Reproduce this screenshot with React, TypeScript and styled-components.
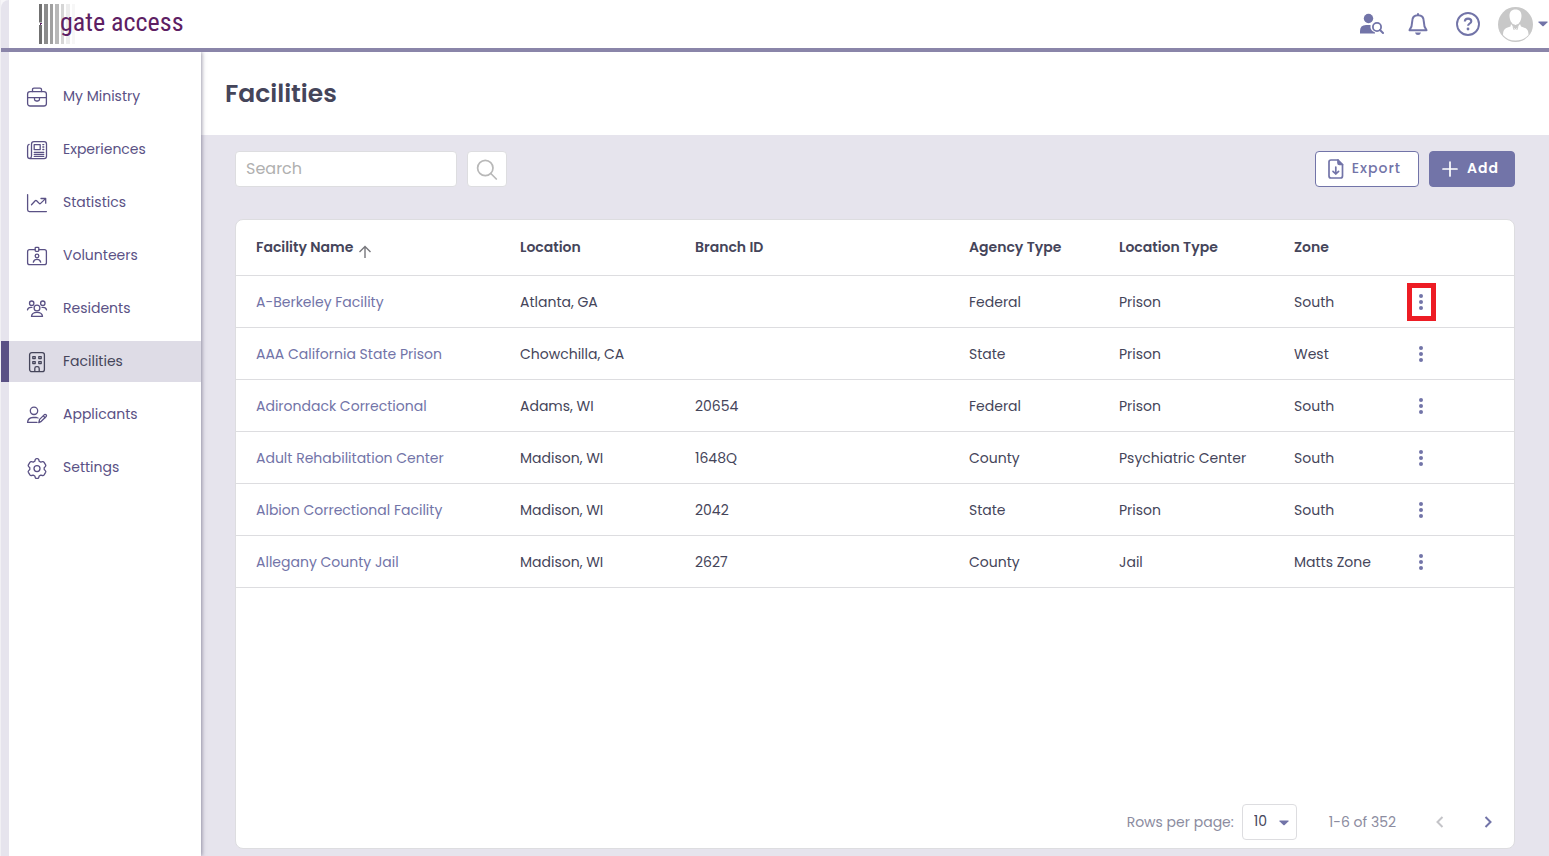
import React from "react";
import styled, { createGlobalStyle } from "styled-components";

const c = {
  lavender: "#e6e4ed",
  purple: "#5a5185",
  accent: "#7274a8",
  ink: "#45455a",
  line: "#dddde0",
};

const GlobalStyle = createGlobalStyle`
  * { box-sizing: border-box; }
  body { margin: 0; background: ${c.lavender}; color: ${c.ink}; font: 14px/20px Poppins, Inter, sans-serif; }
  button, input, select { font: inherit; color: inherit; }
  button { cursor: pointer; }
  svg { display: block; flex: none; }
`;

const Page = styled.div`
  min-height: 100vh;
  display: flex;
  flex-direction: column;
  border-left: 1px solid #f1f0f4;
  background: #f7f6f9;
`;

const Header = styled.header`
  height: 52px;
  display: flex;
  align-items: center;
  justify-content: space-between;
  background: linear-gradient(to right, ${c.lavender} 8px, #fff 8px);
  border-top-left-radius: 8px;
  box-shadow: inset 0 -4px #8a85a9;
  padding: 0 1px 4px 38px;
`;

const Brand = styled.a`
  display: flex;
  align-items: center;
  color: #5d2063;
  font: 26px/40px "Roboto Condensed", "Barlow Semi Condensed", "Liberation Sans Narrow", "DejaVu Sans Condensed", sans-serif;
  text-decoration: none;
`;

const BrandText = styled.span`
  margin: -4px 0 0 -16px;
`;

const HeaderTools = styled.div`
  display: flex;
  align-items: center;
  gap: 24px;
  color: ${c.accent};
`;

const IconButton = styled.button`
  display: flex;
  align-items: center;
  gap: 5px;
  padding: 0;
  border: 0;
  background: none;
  color: inherit;
`;

const AccountButton = styled(IconButton)`
  margin-left: -10px;
`;

const Body = styled.div`
  flex: 1;
  display: flex;
  background: ${c.lavender};
`;

const Sidebar = styled.nav`
  position: relative;
  flex: none;
  width: 200px;
  display: flex;
  flex-direction: column;
  gap: 12px;
  padding-top: 24px;
  background: linear-gradient(to right, ${c.lavender} 8px, #fff 8px);
  box-shadow: 1px 0 4px rgba(60, 55, 90, 0.5);
  clip-path: inset(0 -8px 0 0);
`;

const NavLink = styled.a<{ $active?: boolean }>`
  height: 41px;
  display: flex;
  align-items: center;
  gap: 15px;
  padding-left: 17px;
  border-left: 8px solid ${(p) => (p.$active ? c.purple : "transparent")};
  background: ${(p) => (p.$active ? "#dedce6" : "none")};
  background-clip: padding-box;
  color: ${(p) => (p.$active ? c.ink : c.purple)};
  text-decoration: none;
`;

const NavLabel = styled.span`
  padding-bottom: 2px;
`;

const Main = styled.main`
  flex: 1;
  min-width: 0;
  display: flex;
  flex-direction: column;
`;

const TitleBar = styled.div`
  height: 83px;
  display: flex;
  align-items: center;
  padding: 0 24px;
  background: #fff;
`;

const Title = styled.h1`
  margin: 0;
  font-size: 25px;
  line-height: 36px;
  font-weight: 600;
`;

const Content = styled.div`
  flex: 1;
  display: flex;
  flex-direction: column;
  gap: 32px;
  padding: 16px 34px 7px;
`;

const Toolbar = styled.div`
  display: flex;
  justify-content: space-between;
`;

const Group = styled.div`
  display: flex;
  gap: 10px;
`;

const SearchInput = styled.input`
  width: 222px;
  height: 36px;
  padding: 0 10px 2px;
  border: 1px solid ${c.line};
  border-radius: 4px;
  background: #fff;
  font-size: 16px;
  &::placeholder { color: #b0b0b0; opacity: 1; }
`;

const SearchButton = styled.button`
  width: 40px;
  height: 36px;
  display: flex;
  align-items: center;
  justify-content: center;
  padding: 0;
  border: 1px solid ${c.line};
  border-radius: 4px;
  background: #fff;
  color: #b8b8b8;
`;

const ActionButton = styled.button<{ $primary?: boolean }>`
  height: 36px;
  display: flex;
  align-items: center;
  gap: ${(p) => (p.$primary ? 9 : 8)}px;
  padding: 0 ${(p) => (p.$primary ? 15 : 17)}px 0 12px;
  border: 1px solid ${c.accent};
  border-radius: 4px;
  background: ${(p) => (p.$primary ? c.accent : "#fff")};
  color: ${(p) => (p.$primary ? "#fff" : c.accent)};
  font-weight: ${(p) => (p.$primary ? 600 : 500)};
  letter-spacing: 1px;
`;

const ActionLabel = styled.span`
  padding-bottom: 2px;
`;

const Card = styled.section`
  flex: 1;
  display: flex;
  flex-direction: column;
  justify-content: space-between;
  border: 1px solid ${c.line};
  border-radius: 8px;
  background: #fff;
`;

const Table = styled.table`
  width: 100%;
  table-layout: fixed;
  border-collapse: separate;
  border-spacing: 0;
`;

const HeadCell = styled.th<{ $width?: number }>`
  width: ${(p) => (p.$width ? `${p.$width}px` : "auto")};
  height: 56px;
  padding: 0 0 2px 20px;
  border-bottom: 1px solid ${c.line};
  text-align: left;
  font-weight: 600;
  white-space: nowrap;
`;

const SortButton = styled(IconButton)`
  height: 20px;
  font-weight: 600;
  svg { margin-top: 10px; }
`;

const Cell = styled.td<{ $flush?: boolean }>`
  height: 52px;
  padding: 0 0 0 ${(p) => (p.$flush ? 0 : 20)}px;
  border-bottom: 1px solid ${c.line};
  white-space: nowrap;
`;

const FacilityLink = styled.a`
  color: ${c.accent};
  text-decoration: none;
`;

const RowMenu = styled.button<{ $marked?: boolean }>`
  width: 29px;
  height: 38px;
  display: flex;
  align-items: center;
  justify-content: center;
  padding: 0;
  border: 5px solid ${(p) => (p.$marked ? "#ed1c24" : "transparent")};
  background: none;
  color: ${c.accent};
`;

const Pager = styled.footer`
  display: flex;
  align-items: center;
  justify-content: flex-end;
  padding: 0 18px 8px;
  color: #8c8ca0;
`;

const SelectWrap = styled.span`
  position: relative;
  margin: 0 32px 0 8px;
  svg { position: absolute; right: 8px; top: 16px; pointer-events: none; color: ${c.accent}; }
`;

const Select = styled.select`
  display: block;
  width: 55px;
  height: 36px;
  padding: 0 0 2px 11px;
  appearance: none;
  border: 1px solid ${c.line};
  border-radius: 4px;
  background: #fff;
  color: ${c.ink};
`;

const PageButton = styled(IconButton)<{ $first?: boolean }>`
  margin-left: ${(p) => (p.$first ? 36 : 32)}px;
  color: ${(p) => (p.disabled ? "#c4c4c8" : c.accent)};
`;

const LineIcon = ({ children }: { children: React.ReactNode }) => (
  <svg width="22" height="22" viewBox="0 0 22 22" fill="none" stroke="currentColor" strokeWidth="1.3" strokeLinecap="round" strokeLinejoin="round" aria-hidden="true">
    {children}
  </svg>
);

const Caret = () => (
  <svg width="10" height="6" viewBox="0 0 10 6" fill="currentColor" aria-hidden="true">
    <path d="M.8.5h8.4q.8 0 .3.7L5.7 5q-.7.6-1.400 0L.5 1.200Q0 .5.8.5z" />
  </svg>
);

const navItems: { label: string; active?: boolean; icon: React.ReactNode }[] = [
  {
    label: "My Ministry",
    icon: (
      <>
        <rect x="1.600" y="5.600" width="18.800" height="14.400" rx="2.500" />
        <path d="M6.500 5.500V3.600q0-1.500 1.500-1.500h6q1.500 0 1.500 1.500v1.900M1.600 11.700h18.800M8.500 11.800v1.400q0 1.800 1.800 1.800h1.400q1.800 0 1.800-1.800v-1.400" />
      </>
    ),
  },
  {
    label: "Experiences",
    icon: (
      <>
        <path d="M5.500 17V5q0-2.400 2.400-2.400h10.200q2.400 0 2.400 2.400v12.200q0 2.400-2.400 2.400H4q-2.400 0-2.400-2.400V7.500q0-1.800 1.500-2.100M5.500 17q0 2.200-1.800 2.500" />
        <path d="M8.200 5.600h6v5h-6zM16.800 5.600h1M16.800 8h1M16.800 10.500h1M8.200 13.300h9.600M8.200 15.300h9.600M8.200 17.300h9.600" />
      </>
    ),
  },
  {
    label: "Statistics",
    icon: <path d="M1.600 2.600v15.200q0 1.800 1.800 1.800h17M5.500 12.700l3.700-4q.7-.7 1.400 0l2.600 2.700q.7.700 1.400 0l5-4.800M15 6.500h4.700v4.700" />,
  },
  {
    label: "Volunteers",
    icon: (
      <>
        <path d="M9 4.700H3.600q-2 0-2 2v11q0 2 2 2h14.800q2 0 2-2v-11q0-2-2-2H13" />
        <rect x="9.200" y="2.300" width="3.600" height="4" rx=".8" />
        <circle cx="11" cy="11" r="1.800" />
        <path d="M7.300 17.200q.8-2.800 3.700-2.800t3.700 2.800" />
      </>
    ),
  },
  {
    label: "Residents",
    icon: (
      <>
        <circle cx="11" cy="10" r="2.900" />
        <circle cx="5.700" cy="5.200" r="2.200" />
        <circle cx="16.800" cy="5.200" r="2.200" />
        <path d="M5.500 18.400q.4-4 5.500-4t5.500 4zM1.500 11.800q.4-2.500 3.500-2.500h1M20.500 11.800q-.4-2.500-3.500-2.500h-1" />
      </>
    ),
  },
  {
    label: "Facilities",
    active: true,
    icon: (
      <>
        <rect x="3.600" y="1.600" width="14.800" height="19" rx="2.200" />
        <path d="M6.800 5.600h2.400v2H6.800zM12.800 5.600h2.400v2h-2.400zM6.800 10.600h2.400v2H6.800zM12.800 10.600h2.400v2h-2.400zM8.800 20.400v-3q0-1.800 1.800-1.800h.8q1.800 0 1.800 1.800v3" />
      </>
    ),
  },
  {
    label: "Applicants",
    icon: (
      <>
        <circle cx="8" cy="6.800" r="3.700" />
        <path d="M11 18.400H1.600q.2-4.700 5.400-4.900h3.500l1.500.5M12.800 18.600l.8-3.200 4.800-4.800q.8-.6 1.700.1.800.9.100 1.800l-4.900 4.800zM17.200 11.800l1.900 1.900" />
      </>
    ),
  },
  {
    label: "Settings",
    icon: (
      <>
        <path d="M9.200 2.800q.3-1.200 1.300-1.200h1q1 0 1.300 1.200l.4 1.400 1.600.9 1.700-.4q1-.2 1.600.7l1.500 2.500q.5.900-.3 1.700l-1.100 1.100v1.800l1.100 1.100q.8.800.3 1.700l-1.500 2.500q-.6.900-1.600.7l-1.700-.4-1.600.9-.4 1.300q-.3 1.200-1.300 1.200h-1q-1 0-1.300-1.200L8.800 19l-1.600-.9-1.700.4q-1 .2-1.600-.7l-1.500-2.500q-.5-.9.300-1.700l1.100-1.100v-1.800L2.700 9.600q-.8-.8-.3-1.700l1.500-2.500q.6-.9 1.600-.7l1.700.4 1.600-.9z" />
        <circle cx="11" cy="11.600" r="3" />
      </>
    ),
  },
];

const columns: [string, number | undefined][] = [
  ["Facility Name", 264],
  ["Location", 175],
  ["Branch ID", 274],
  ["Agency Type", 150],
  ["Location Type", 175],
  ["Zone", 133],
  ["", undefined],
];

const facilities = [
  ["A-Berkeley Facility", "Atlanta, GA", "", "Federal", "Prison", "South"],
  ["AAA California State Prison", "Chowchilla, CA", "", "State", "Prison", "West"],
  ["Adirondack Correctional", "Adams, WI", "20654", "Federal", "Prison", "South"],
  ["Adult Rehabilitation Center", "Madison, WI", "1648Q", "County", "Psychiatric Center", "South"],
  ["Albion Correctional Facility", "Madison, WI", "2042", "State", "Prison", "South"],
  ["Allegany County Jail", "Madison, WI", "2627", "County", "Jail", "Matts Zone"],
];

export default function App() {
  return (
    <Page>
      <GlobalStyle />
      <Header>
        <Brand href="#">
          <svg width="37" height="40" viewBox="0 0 37 40" aria-hidden="true">
            <path fill="#707070" d="M0 0h3v40H0z" />
            <path fill="#8c8c8c" d="M5 0h4v40H5z" />
            <path fill="#a0a0a0" d="M11 0h3v40h-3z" />
            <path fill="#b8b8b8" d="M16 0h4v40h-4z" />
            <path fill="#d6d6d6" d="M22 0h3v40h-3z" />
            <path fill="#ededed" d="M27 0h4v40h-4z" />
            <path fill="#f7f7f7" d="M33 0h3v40h-3z" />
            <path fill="#fff" d="M0 18.500h3v2.500H0z" />
            <path fill="#5d2063" d="M1 19h2v1H2v1H1z" />
          </svg>
          <BrandText>gate access</BrandText>
        </Brand>
        <HeaderTools>
          <IconButton aria-label="Find person">
            <svg width="24" height="22" viewBox="0 0 24 22" fill="currentColor">
              <circle cx="8.500" cy="5.500" r="4.700" />
              <path d="M0 20.500V18q0-6 6-6h4.500q-.7 5.500 4.500 7.500v1z" />
              <circle cx="17" cy="14" r="4.100" fill="none" stroke="currentColor" strokeWidth="1.800" />
              <path d="M20 17l3 3" stroke="currentColor" strokeWidth="2" strokeLinecap="round" />
            </svg>
          </IconButton>
          <IconButton aria-label="Notifications">
            <svg width="20" height="24" viewBox="0 0 20 24" fill="none" stroke="currentColor" strokeWidth="2" strokeLinejoin="round" strokeLinecap="round">
              <path d="M10 3.300c-3.800 0-5.800 2.700-5.800 6.200 0 4.400-.8 6.200-2.700 8.700h17c-1.900-2.500-2.700-4.300-2.700-8.700 0-3.500-2-6.200-5.800-6.200zM10 2v1" />
              <path d="M7 20.500h6q-.6 2.500-3 2.500t-3-2.500z" fill="currentColor" stroke="none" />
            </svg>
          </IconButton>
          <IconButton aria-label="Help">
            <svg width="32" height="24" viewBox="-4 0 32 24" fill="none" stroke="currentColor" strokeWidth="1.900">
              <circle cx="12" cy="12" r="11" />
              <path d="M8.800 9.500c.1-2 1.300-2.900 3.200-2.900s3.300 1 3.300 2.600c0 2.300-3.200 2.300-3.200 4.600" strokeWidth="2.100" />
              <circle cx="12" cy="17" r="1.400" fill="currentColor" stroke="none" />
            </svg>
          </IconButton>
          <AccountButton aria-label="Account">
            <svg width="35" height="35" viewBox="0 0 35 35">
              <circle cx="17.500" cy="17.500" r="17.500" fill="#c8c8c8" />
              <path d="M17.500 2.500c-4 0-6.200 2.700-6 6.500.2 4 2 9 6 9s5.800-5 6-9c.2-3.800-2-6.500-6-6.500z" fill="#fff" />
              <path d="M13 17l4.500 5.500L22 17l1 2.500c4 1.500 7.500 1.500 7.500 8.500q-5 5.500-13 5.500T5 28c0-7 3.500-7 7.500-8.500z" fill="#fff" />
              <path d="M12.500 15q1.500 3.500 5 3.500t5-3.500M15 19.500l1.200 3.500M20 19.500L18.800 23" fill="none" stroke="#c8c8c8" strokeWidth="1" />
            </svg>
            <Caret />
          </AccountButton>
        </HeaderTools>
      </Header>
      <Body>
        <Sidebar aria-label="Main">
          {navItems.map((item) => (
            <NavLink key={item.label} href="#" $active={item.active} aria-current={item.active ? "page" : undefined}>
              <LineIcon>{item.icon}</LineIcon>
              <NavLabel>{item.label}</NavLabel>
            </NavLink>
          ))}
        </Sidebar>
        <Main>
          <TitleBar>
            <Title>Facilities</Title>
          </TitleBar>
          <Content>
            <Toolbar>
              <Group>
                <SearchInput type="search" placeholder="Search" aria-label="Search" />
                <SearchButton aria-label="Search">
                  <svg width="22" height="22" viewBox="0 0 22 22" fill="none" stroke="currentColor" strokeWidth="1.700" strokeLinecap="round">
                    <circle cx="9.300" cy="10" r="7.700" />
                    <path d="M14.800 15.500l5.500 5.500" />
                  </svg>
                </SearchButton>
              </Group>
              <Group>
                <ActionButton>
                  <svg width="16" height="20" viewBox="0 0 16 20" fill="none" stroke="currentColor" strokeWidth="1.700" strokeLinejoin="round" strokeLinecap="round">
                    <path d="M10 1H3Q1 1 1 3v14q0 2 2 2h9.500q2 0 2-2V5.500" />
                    <path d="M10 1v3q0 1.500 1.500 1.500h3z" fill="currentColor" />
                    <path d="M7.800 8v7M5 12.300L7.800 15l2.800-2.700" />
                  </svg>
                  <ActionLabel>Export</ActionLabel>
                </ActionButton>
                <ActionButton $primary>
                  <svg width="16" height="16" viewBox="0 0 16 16" stroke="currentColor" strokeWidth="1.700" strokeLinecap="round">
                    <path d="M8 1v14M1 8h14" />
                  </svg>
                  <ActionLabel>Add</ActionLabel>
                </ActionButton>
              </Group>
            </Toolbar>
            <Card>
              <Table>
                <thead>
                  <tr>
                    {columns.map(([name, width], i) => (
                      <HeadCell key={name} $width={width} aria-sort={i === 0 ? "ascending" : undefined}>
                        {i === 0 ? (
                          <SortButton>
                            {name}
                            <svg width="14" height="14" viewBox="0 0 14 14" fill="none" stroke="#77777c" strokeWidth="1.400">
                              <path d="M7 13V2M1.500 7L7 1.500 12.500 7" />
                            </svg>
                          </SortButton>
                        ) : (
                          name
                        )}
                      </HeadCell>
                    ))}
                  </tr>
                </thead>
                <tbody>
                  {facilities.map(([name, ...rest], i) => (
                    <tr key={name}>
                      <Cell>
                        <FacilityLink href="#">{name}</FacilityLink>
                      </Cell>
                      {rest.map((value, j) => (
                        <Cell key={j}>{value}</Cell>
                      ))}
                      <Cell $flush>
                        <RowMenu $marked={i === 0} aria-label={`Actions for ${name}`}>
                          <svg width="5" height="16" viewBox="0 0 5 16" fill="currentColor">
                            <circle cx="2" cy="2" r="2" />
                            <circle cx="2" cy="8" r="2" />
                            <circle cx="2" cy="14" r="2" />
                          </svg>
                        </RowMenu>
                      </Cell>
                    </tr>
                  ))}
                </tbody>
              </Table>
              <Pager>
                <label htmlFor="rows">Rows per page:</label>
                <SelectWrap>
                  <Select id="rows" defaultValue="10">
                    <option>10</option>
                    <option>25</option>
                    <option>50</option>
                  </Select>
                  <Caret />
                </SelectWrap>
                <span>1-6 of 352</span>
                <PageButton $first disabled aria-label="Previous page">
                  <svg width="16" height="16" viewBox="0 0 16 16" fill="none" stroke="currentColor" strokeWidth="2">
                    <path d="M10.500 3L5.500 8l5 5" />
                  </svg>
                </PageButton>
                <PageButton aria-label="Next page">
                  <svg width="16" height="16" viewBox="0 0 16 16" fill="none" stroke="currentColor" strokeWidth="2">
                    <path d="M5.500 3l5 5-5 5" />
                  </svg>
                </PageButton>
              </Pager>
            </Card>
          </Content>
        </Main>
      </Body>
    </Page>
  );
}
